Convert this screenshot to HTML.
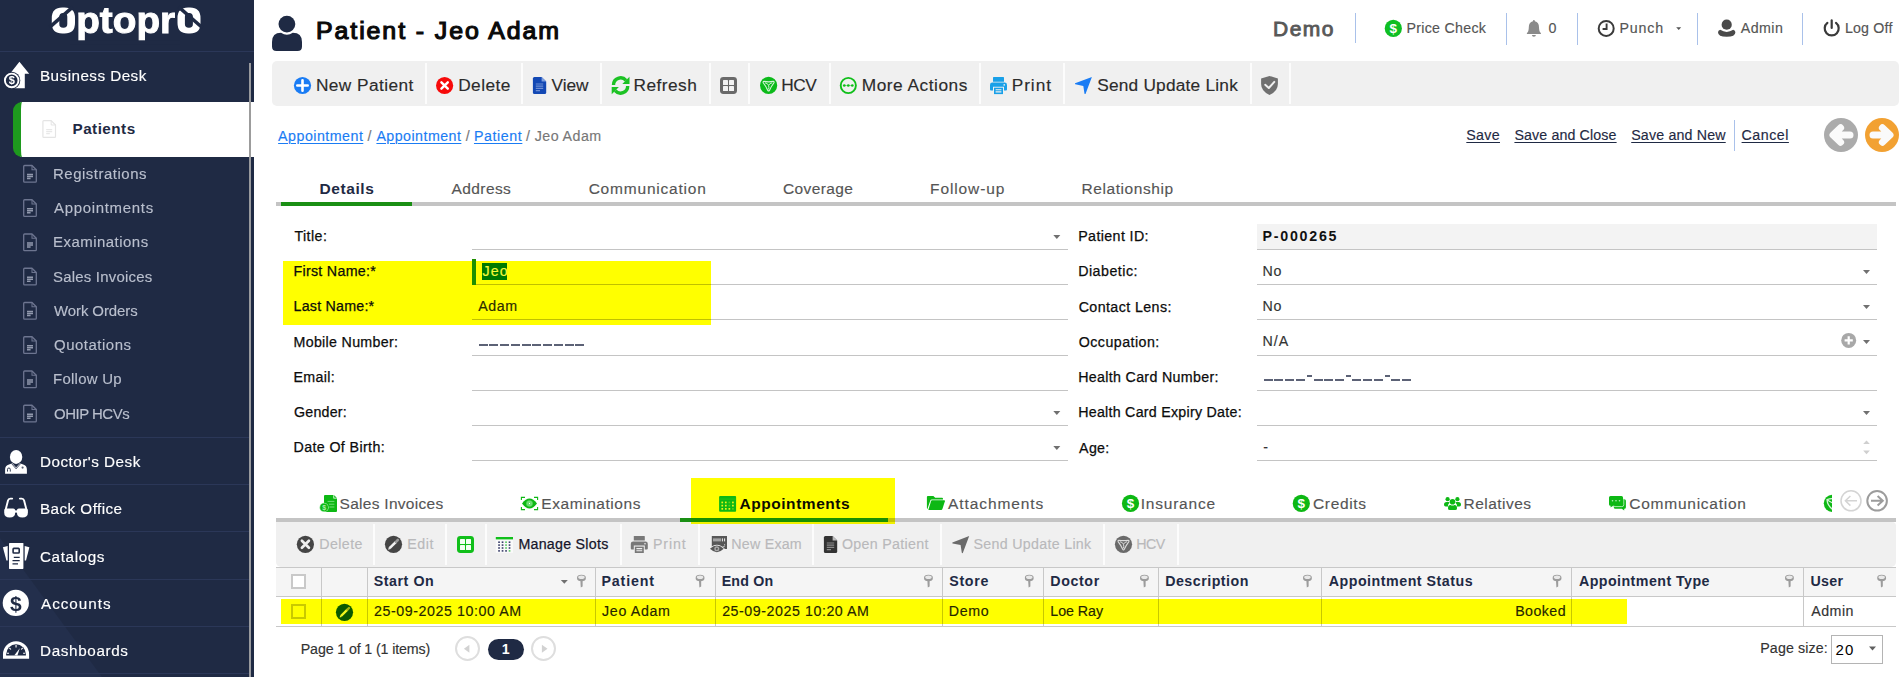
<!DOCTYPE html>
<html><head><meta charset="utf-8"><title>Patient - Jeo Adam</title>
<style>
html,body{margin:0;padding:0;}
body{width:1903px;height:677px;position:relative;overflow:hidden;background:#fff;font-family:"Liberation Sans",sans-serif;}
.b{position:absolute;display:block;box-sizing:border-box;}
.t{position:absolute;white-space:pre;display:block;}
</style></head>
<body>
<div class="b" style="left:0px;top:0px;width:254px;height:677px;background:#1f2a44;"></div>
<svg class="b" style="left:0;top:530px" width="110" height="147" viewBox="0 0 110 147"><polygon points="0,8 102,147 0,147" fill="#232f4c"/></svg>
<div class="b" style="left:0px;top:51px;width:254px;height:1px;background:#2b3758;"></div>
<div class="b" style="left:249px;top:63px;width:2px;height:614px;background:#999a9e;"></div>
<div class="b" style="left:13px;top:102px;width:241px;height:55px;background:#fff;border-left:8px solid #1e9a1e;border-radius:9px 0 0 9px;"></div>
<div class="b" style="left:249px;top:102px;width:2px;height:55px;background:#9c9c9c;"></div>
<div class="b" style="left:0px;top:437px;width:249px;height:1px;background:#2b3758;"></div>
<div class="b" style="left:0px;top:484px;width:249px;height:1px;background:#2b3758;"></div>
<div class="b" style="left:0px;top:531px;width:249px;height:1px;background:#2b3758;"></div>
<div class="b" style="left:0px;top:579px;width:249px;height:1px;background:#2b3758;"></div>
<div class="b" style="left:0px;top:626px;width:249px;height:1px;background:#2b3758;"></div>
<div class="b" style="left:0px;top:673px;width:249px;height:1px;background:#2b3758;"></div>
<div class="b" style="left:1355px;top:13px;width:1px;height:29.5px;background:#a9c1ea;"></div>
<div class="b" style="left:1506px;top:13px;width:1px;height:31.5px;background:#a9c1ea;"></div>
<div class="b" style="left:1577px;top:13px;width:1px;height:31.5px;background:#a9c1ea;"></div>
<div class="b" style="left:1697px;top:13px;width:1px;height:31.5px;background:#a9c1ea;"></div>
<div class="b" style="left:1802px;top:13px;width:1px;height:31.5px;background:#a9c1ea;"></div>
<div class="b" style="left:272px;top:61px;width:1627px;height:45px;background:#f0f0f0;border-radius:5px;"></div>
<div class="b" style="left:425px;top:63px;width:1.5px;height:41px;background:#fcfcfc;"></div>
<div class="b" style="left:521px;top:63px;width:1.5px;height:41px;background:#fcfcfc;"></div>
<div class="b" style="left:600px;top:63px;width:1.5px;height:41px;background:#fcfcfc;"></div>
<div class="b" style="left:709px;top:63px;width:1.5px;height:41px;background:#fcfcfc;"></div>
<div class="b" style="left:748px;top:63px;width:1.5px;height:41px;background:#fcfcfc;"></div>
<div class="b" style="left:829px;top:63px;width:1.5px;height:41px;background:#fcfcfc;"></div>
<div class="b" style="left:979px;top:63px;width:1.5px;height:41px;background:#fcfcfc;"></div>
<div class="b" style="left:1063px;top:63px;width:1.5px;height:41px;background:#fcfcfc;"></div>
<div class="b" style="left:1250px;top:63px;width:1.5px;height:41px;background:#fcfcfc;"></div>
<div class="b" style="left:1289px;top:63px;width:1.5px;height:41px;background:#fcfcfc;"></div>
<div class="b" style="left:1734px;top:120px;width:1px;height:31px;background:#a9c1ea;"></div>
<div class="b" style="left:276px;top:202px;width:1620px;height:4px;background:#c4c4c4;"></div>
<div class="b" style="left:281px;top:202px;width:131px;height:4px;background:#1a8f14;"></div>
<div class="b" style="left:283px;top:261px;width:428px;height:64px;background:#ffff00;"></div>
<div class="b" style="left:472px;top:249px;width:596px;height:1px;background:#c4c4c4;"></div>
<div class="b" style="left:1257px;top:249px;width:620px;height:1px;background:#c4c4c4;"></div>
<div class="b" style="left:472px;top:284px;width:596px;height:1px;background:#c4c4c4;"></div>
<div class="b" style="left:1257px;top:284px;width:620px;height:1px;background:#c4c4c4;"></div>
<div class="b" style="left:472px;top:319px;width:596px;height:1px;background:#c4c4c4;"></div>
<div class="b" style="left:1257px;top:319px;width:620px;height:1px;background:#c4c4c4;"></div>
<div class="b" style="left:472px;top:355px;width:596px;height:1px;background:#c4c4c4;"></div>
<div class="b" style="left:1257px;top:355px;width:620px;height:1px;background:#c4c4c4;"></div>
<div class="b" style="left:472px;top:390px;width:596px;height:1px;background:#c4c4c4;"></div>
<div class="b" style="left:1257px;top:390px;width:620px;height:1px;background:#c4c4c4;"></div>
<div class="b" style="left:472px;top:425px;width:596px;height:1px;background:#c4c4c4;"></div>
<div class="b" style="left:1257px;top:425px;width:620px;height:1px;background:#c4c4c4;"></div>
<div class="b" style="left:472px;top:460px;width:596px;height:1px;background:#c4c4c4;"></div>
<div class="b" style="left:1257px;top:460px;width:620px;height:1px;background:#c4c4c4;"></div>
<div class="b" style="left:472px;top:284px;width:239px;height:1px;background:#c0c000;"></div>
<div class="b" style="left:472px;top:319px;width:239px;height:1px;background:#c0c000;"></div>
<div class="b" style="left:1257px;top:224px;width:620px;height:25px;background:#f3f3f3;"></div>
<div class="b" style="left:472px;top:259px;width:4px;height:25.5px;background:#1e8f00;"></div>
<div class="b" style="left:482px;top:263px;width:25px;height:17px;background:#007a00;"></div>
<div class="b" style="left:478.7px;top:344.4px;width:9px;height:2px;background:#5c6276;"></div>
<div class="b" style="left:489.45px;top:344.4px;width:9px;height:2px;background:#5c6276;"></div>
<div class="b" style="left:500.2px;top:344.4px;width:9px;height:2px;background:#5c6276;"></div>
<div class="b" style="left:510.95px;top:344.4px;width:9px;height:2px;background:#5c6276;"></div>
<div class="b" style="left:521.7px;top:344.4px;width:9px;height:2px;background:#5c6276;"></div>
<div class="b" style="left:532.45px;top:344.4px;width:9px;height:2px;background:#5c6276;"></div>
<div class="b" style="left:543.2px;top:344.4px;width:9px;height:2px;background:#5c6276;"></div>
<div class="b" style="left:553.95px;top:344.4px;width:9px;height:2px;background:#5c6276;"></div>
<div class="b" style="left:564.7px;top:344.4px;width:9px;height:2px;background:#5c6276;"></div>
<div class="b" style="left:575.45px;top:344.4px;width:9px;height:2px;background:#5c6276;"></div>
<div class="b" style="left:1263.6px;top:379.2px;width:9px;height:2px;background:#5c6276;"></div>
<div class="b" style="left:1274.3px;top:379.2px;width:9px;height:2px;background:#5c6276;"></div>
<div class="b" style="left:1285.0px;top:379.2px;width:9px;height:2px;background:#5c6276;"></div>
<div class="b" style="left:1295.7px;top:379.2px;width:9px;height:2px;background:#5c6276;"></div>
<div class="b" style="left:1313.7px;top:379.2px;width:9px;height:2px;background:#5c6276;"></div>
<div class="b" style="left:1324.4px;top:379.2px;width:9px;height:2px;background:#5c6276;"></div>
<div class="b" style="left:1335.1px;top:379.2px;width:9px;height:2px;background:#5c6276;"></div>
<div class="b" style="left:1352.3px;top:379.2px;width:9px;height:2px;background:#5c6276;"></div>
<div class="b" style="left:1363.0px;top:379.2px;width:9px;height:2px;background:#5c6276;"></div>
<div class="b" style="left:1373.7px;top:379.2px;width:9px;height:2px;background:#5c6276;"></div>
<div class="b" style="left:1391.3px;top:379.2px;width:9px;height:2px;background:#5c6276;"></div>
<div class="b" style="left:1402.0px;top:379.2px;width:9px;height:2px;background:#5c6276;"></div>
<div class="b" style="left:1306.8px;top:375.4px;width:5px;height:1.6px;background:#5c6276;"></div>
<div class="b" style="left:1345.9px;top:375.4px;width:5px;height:1.6px;background:#5c6276;"></div>
<div class="b" style="left:1384.8px;top:375.4px;width:5px;height:1.6px;background:#5c6276;"></div>
<div class="b" style="left:691px;top:478px;width:204px;height:46px;background:#ffff00;"></div>
<div class="b" style="left:276px;top:518px;width:1620px;height:4px;background:#c4c4c4;"></div>
<div class="b" style="left:680px;top:518px;width:208px;height:4px;background:#1a8f14;"></div>
<div class="b" style="left:691px;top:518px;width:197px;height:4px;background:#1a8f00;"></div>
<div class="b" style="left:888px;top:518px;width:7px;height:4px;background:#c4c400;"></div>
<div class="b" style="left:276px;top:522px;width:1620px;height:45px;background:#f0f0f0;border-radius:0 4px 5px 5px;"></div>
<div class="b" style="left:691px;top:522px;width:204px;height:1.7px;background:#f0f000;"></div>
<div class="b" style="left:373px;top:524px;width:1.5px;height:41px;background:#fcfcfc;"></div>
<div class="b" style="left:445px;top:524px;width:1.5px;height:41px;background:#fcfcfc;"></div>
<div class="b" style="left:485px;top:524px;width:1.5px;height:41px;background:#fcfcfc;"></div>
<div class="b" style="left:620px;top:524px;width:1.5px;height:41px;background:#fcfcfc;"></div>
<div class="b" style="left:698px;top:524px;width:1.5px;height:41px;background:#fcfcfc;"></div>
<div class="b" style="left:812px;top:524px;width:1.5px;height:41px;background:#fcfcfc;"></div>
<div class="b" style="left:940px;top:524px;width:1.5px;height:41px;background:#fcfcfc;"></div>
<div class="b" style="left:1103px;top:524px;width:1.5px;height:41px;background:#fcfcfc;"></div>
<div class="b" style="left:1177px;top:524px;width:1.5px;height:41px;background:#fcfcfc;"></div>
<div class="b" style="left:276px;top:567px;width:1620px;height:30px;background:#f5f5f5;border-top:1px solid #c8c8c8;border-bottom:1px solid #c8c8c8;"></div>
<div class="b" style="left:276px;top:626px;width:1620px;height:1px;background:#c8c8c8;"></div>
<div class="b" style="left:281px;top:599px;width:1346px;height:24.6px;background:#ffff00;"></div>
<div class="b" style="left:321px;top:568px;width:1px;height:58px;background:#c8c8c8;"></div>
<div class="b" style="left:367px;top:568px;width:1px;height:58px;background:#c8c8c8;"></div>
<div class="b" style="left:595px;top:568px;width:1px;height:58px;background:#c8c8c8;"></div>
<div class="b" style="left:715px;top:568px;width:1px;height:58px;background:#c8c8c8;"></div>
<div class="b" style="left:942px;top:568px;width:1px;height:58px;background:#c8c8c8;"></div>
<div class="b" style="left:1043px;top:568px;width:1px;height:58px;background:#c8c8c8;"></div>
<div class="b" style="left:1158px;top:568px;width:1px;height:58px;background:#c8c8c8;"></div>
<div class="b" style="left:1321px;top:568px;width:1px;height:58px;background:#c8c8c8;"></div>
<div class="b" style="left:1571px;top:568px;width:1px;height:58px;background:#c8c8c8;"></div>
<div class="b" style="left:1803px;top:568px;width:1px;height:58px;background:#c8c8c8;"></div>
<div class="b" style="left:321px;top:599px;width:1px;height:24.6px;background:#c8c800;"></div>
<div class="b" style="left:367px;top:599px;width:1px;height:24.6px;background:#c8c800;"></div>
<div class="b" style="left:595px;top:599px;width:1px;height:24.6px;background:#c8c800;"></div>
<div class="b" style="left:715px;top:599px;width:1px;height:24.6px;background:#c8c800;"></div>
<div class="b" style="left:942px;top:599px;width:1px;height:24.6px;background:#c8c800;"></div>
<div class="b" style="left:1043px;top:599px;width:1px;height:24.6px;background:#c8c800;"></div>
<div class="b" style="left:1158px;top:599px;width:1px;height:24.6px;background:#c8c800;"></div>
<div class="b" style="left:1321px;top:599px;width:1px;height:24.6px;background:#c8c800;"></div>
<div class="b" style="left:1571px;top:599px;width:1px;height:24.6px;background:#c8c800;"></div>
<div class="b" style="left:291px;top:574px;width:15px;height:15px;background:#fff;border:2px solid #c9c9c9;"></div>
<div class="b" style="left:291px;top:604px;width:15px;height:15px;background:#ffff00;border:2px solid #c9c900;"></div>
<div class="b" style="left:454.5px;top:636.3px;width:25px;height:25px;background:#fff;border:2px solid #dedede;border-radius:50%;"></div>
<div class="b" style="left:531.3px;top:636.3px;width:25px;height:25px;background:#fff;border:2px solid #dedede;border-radius:50%;"></div>
<div class="b" style="left:488px;top:639px;width:36px;height:20.6px;background:#1f2a44;border-radius:11px;"></div>
<div class="b" style="left:1831px;top:635px;width:52px;height:29px;background:#fff;border:1px solid #b4b4b4;"></div>
<svg class="b" style="left:0;top:0" width="1903" height="677" viewBox="0 0 1903 677"><circle cx="286.9" cy="24.1" r="8.4" fill="#1f2a44"/>
<path d="M272 46.5 V42 Q272 32.8 281 32.8 Q286.9 36.9 292.8 32.8 Q302 32.8 302 42 V46.5 Q302 51 297.5 51 H276.5 Q272 51 272 46.5 Z" fill="#1f2a44"/>
<circle cx="1393.3" cy="28.4" r="8.6" fill="#0fbf24"/>
<text x="1393.3" y="33.2" text-anchor="middle" font-family="Liberation Sans, sans-serif" font-weight="700" font-size="13.5" fill="#fff">$</text>
<path d="M1533.9 20 Q1534.9 20 1534.9 21.2 Q1539 22.4 1539 27.2 Q1539 31.6 1540.9 33 V34 H1526.9 V33 Q1528.8 31.6 1528.8 27.2 Q1528.8 22.4 1532.9 21.2 Q1532.9 20 1533.9 20 Z" fill="#8a8a8a"/>
<path d="M1531.9 35 H1535.9 Q1535.9 36.8 1533.9 36.8 Q1531.9 36.8 1531.9 35 Z" fill="#8a8a8a"/>
<circle cx="1606.2" cy="28.4" r="7.5" fill="none" stroke="#3a3a3a" stroke-width="2"/>
<path d="M1606.6 23.6 V29 H1602.6" fill="none" stroke="#3a3a3a" stroke-width="1.9"/>
<path d="M1676.2 27.2 H1681.2 L1678.7 30 Z" fill="#555"/>
<circle cx="1726.7" cy="24.7" r="5.1" fill="#4a4a4a"/>
<path d="M1718 32.2 Q1718 30.4 1720.2 29.8 Q1726.7 34 1733.2 29.8 Q1735.4 30.4 1735.4 32.2 Q1735.4 36.8 1726.7 36.8 Q1718 36.8 1718 32.2 Z" fill="#4a4a4a"/>
<path d="M1827.4 22.9 A7 7 0 1 0 1836 22.9" fill="none" stroke="#3a3a3a" stroke-width="2.2" stroke-linecap="round"/>
<path d="M1831.7 20.4 V28" stroke="#3a3a3a" stroke-width="2.2" stroke-linecap="round"/>
<circle cx="302.5" cy="85.5" r="8.6" fill="#1a7cf4"/>
<path d="M297.3 85.5 H307.7 M302.5 80.3 V90.7" stroke="#fff" stroke-width="2.6" stroke-linecap="round"/>
<circle cx="444.6" cy="85.5" r="8.6" fill="#f70a0a"/>
<path d="M441.4 82.3 L447.8 88.7 M447.8 82.3 L441.4 88.7" stroke="#fff" stroke-width="2.4" stroke-linecap="round"/>
<path d="M534.4 76.9 H541.6 L546.2 81.5 V92.5 Q546.2 94 544.7 94 H534.4 Q532.9 94 532.9 92.5 V78.4 Q532.9 76.9 534.4 76.9 Z" fill="#1348b4"/>
<path d="M541.6 76.9 V81.5 H546.2 Z" fill="#7fa0e0"/>
<path d="M535.8 84 H543.2 M535.8 86.2 H543.2 M535.8 88.4 H543.2 M535.8 90.6 H540" stroke="#6f8fd4" stroke-width="1.2"/>
<path d="M613.5 85 A7.1 7.1 0 0 1 626 80.4" fill="none" stroke="#1cc224" stroke-width="3.4"/>
<path d="M629.5 76.8 V84 H622.3 Z" fill="#1cc224"/>
<path d="M627.7 86 A7.1 7.1 0 0 1 615.2 90.6" fill="none" stroke="#1cc224" stroke-width="3.4"/>
<path d="M611.7 94.2 V87 H618.9 Z" fill="#1cc224"/>
<rect x="720" y="77" width="17" height="17" rx="3.4" fill="#6a6a6a"/>
<rect x="723" y="80" width="5" height="5" rx="0.6" fill="#f4f4f4"/><rect x="729" y="80" width="5" height="5" rx="0.6" fill="#f4f4f4"/><rect x="723" y="86" width="5" height="5" rx="0.6" fill="#f4f4f4"/><rect x="729" y="86" width="5" height="5" rx="0.6" fill="#f4f4f4"/>
<circle cx="768.6" cy="85.4" r="8.6" fill="#0cba1a"/>
<path d="M764.0 81.4 Q768.6 82.2 773.2 81.4 Q774.6 81.60000000000001 773.8000000000001 83.0 Q771.2 86.4 769.4 90.4 Q768.6 91.60000000000001 767.8000000000001 90.4 Q766.0 86.4 763.4 83.0 Q762.6 81.60000000000001 764.0 81.4 Z" fill="none" stroke="#d4f4d7" stroke-width="1.15" stroke-linejoin="round"/>
<path d="M765.0 82.80000000000001 Q767.6 83.0 768.6 85.4 Q769.6 83.0 772.2 82.80000000000001 M768.6 85.4 Q769.2 87.4 768.6 89.4" fill="none" stroke="#d4f4d7" stroke-width="1"/>
<circle cx="848.3" cy="85.5" r="7.6" fill="none" stroke="#10bf1a" stroke-width="1.9"/>
<circle cx="844.3" cy="85.5" r="1.35" fill="#10bf1a"/><circle cx="848.3" cy="85.5" r="1.35" fill="#10bf1a"/><circle cx="852.3" cy="85.5" r="1.35" fill="#10bf1a"/>
<path d="M844.3 85.5 H852.3" stroke="#10bf1a" stroke-width="0.7" opacity="0.6"/>
<path d="M993.6 77.1 H1003.4 Q1004 77.1 1004 77.69999999999999 V81.69999999999999 H993 V77.69999999999999 Q993 77.1 993.6 77.1 Z" fill="#19a0e8"/>
<path d="M992.4 82.5 H1004.6 Q1007 82.5 1007 84.89999999999999 V89.5 Q1007 90.5 1006 90.5 H1004 V86.69999999999999 H993 V90.5 H991 Q990 90.5 990 89.5 V84.89999999999999 Q990 82.5 992.4 82.5 Z" fill="#19a0e8"/>
<rect x="994" y="87.69999999999999" width="9" height="6.4" fill="#19a0e8"/>
<path d="M995.6 89.69999999999999 H1001.4 M995.6 91.89999999999999 H1001.4" stroke="#f0f0f0" stroke-width="1.1"/>
<circle cx="1004.2" cy="84.89999999999999" r="0.8" fill="#f0f0f0"/>
<path d="M1091.9 76.9 L1085.5 93.9 Q1084.9 94.30000000000001 1084.5 93.7 L1083.3 85.9 L1075.3 84.3 Q1074.7 83.9 1075.1000000000001 83.3 Z" fill="#1a7cf4"/>
<path d="M1269.5 75.9 L1277.9 78.4 V84 Q1277.9 91.2 1269.5 94.9 Q1261.1 91.2 1261.1 84 V78.4 Z" fill="#707070"/>
<path d="M1265.2 84.8 L1268.8 88 L1274.3 81.9" fill="none" stroke="#efefef" stroke-width="2" stroke-linecap="round" stroke-linejoin="round"/>
<circle cx="1841" cy="135" r="17" fill="#ababab"/>
<path d="M1850 135 H1833.4 M1840.6 127.8 L1833 135 L1840.6 142.2" fill="none" stroke="#fafafa" stroke-width="7" stroke-linecap="round" stroke-linejoin="round"/>
<circle cx="1882" cy="135" r="17" fill="#f2a132"/>
<path d="M1873 135 H1889.6 M1882.4 127.8 L1890 135 L1882.4 142.2" fill="none" stroke="#fafafa" stroke-width="7" stroke-linecap="round" stroke-linejoin="round"/>
<path d="M1053.3 235.0 H1060.3 L1056.8 239.0 Z" fill="#707070"/>
<path d="M1053.3 411.0 H1060.3 L1056.8 415.0 Z" fill="#707070"/>
<path d="M1053.3 446.0 H1060.3 L1056.8 450.0 Z" fill="#707070"/>
<path d="M1863.0 270.0 H1870.0 L1866.5 274.0 Z" fill="#707070"/>
<path d="M1863.0 305.0 H1870.0 L1866.5 309.0 Z" fill="#707070"/>
<path d="M1863.0 340.0 H1870.0 L1866.5 344.0 Z" fill="#707070"/>
<path d="M1863.0 411.0 H1870.0 L1866.5 415.0 Z" fill="#707070"/>
<circle cx="1848.7" cy="340.4" r="7.5" fill="#a8a8a8"/>
<path d="M1844.6 340.4 H1852.8 M1848.7 336.3 V344.5" stroke="#fff" stroke-width="2.2"/>
<path d="M1863.2 444 H1869.8 L1866.5 440.4 Z" fill="#cfcfcf"/>
<path d="M1863.2 450.6 H1869.8 L1866.5 454.2 Z" fill="#cfcfcf"/>
<path d="M325 494.9 H333.4 L337 498.5 V510.9 Q337 511.9 336 511.9 H325 Q324 511.9 324 510.9 V495.9 Q324 494.9 325 494.9 Z" fill="#0db814"/>
<path d="M333.4 494.9 V498.5 H337 Z" fill="#fff"/>
<path d="M334.2 495.2 L336.7 497.7 H334.2 Z" fill="#0db814"/>
<path d="M327.6 501.4 H334.4 M329 504.2 H334.4 M329.4 507 H334.4" stroke="#7fe085" stroke-width="0.9"/>
<circle cx="324.1" cy="507.4" r="4.6" fill="#9be79f"/>
<circle cx="324.1" cy="507.4" r="3.9" fill="#0db814"/>
<text x="324.1" y="510" text-anchor="middle" font-family="Liberation Sans, sans-serif" font-weight="700" font-size="7" fill="#a8eeac">$</text>
<path d="M521.4 500 V497.4 H525 M534 497.4 H537.6 V500 M521.4 507 V509.6 H525 M534 509.6 H537.6 V507" fill="none" stroke="#0db814" stroke-width="1.1"/>
<path d="M522 503.5 Q529.5 493.6 537 503.5 Q529.5 513.4 522 503.5 Z" fill="#0db814"/>
<circle cx="529.5" cy="503.5" r="3.3" fill="#5ad860"/>
<circle cx="529.5" cy="503.5" r="2" fill="none" stroke="#8be68f" stroke-width="0.6"/>
<circle cx="529.5" cy="503.5" r="0.7" fill="#fff"/>
<rect x="719.1" y="496" width="17" height="15.8" rx="1" fill="#0db814"/>
<path d="M719.1 499.1 H736.1" stroke="#35c81a" stroke-width="0.6"/>
<rect x="721.4" y="501.6" width="1.7" height="1.7" fill="#e8f51a" opacity="1"/>
<rect x="724.9499999999999" y="501.6" width="1.7" height="1.7" fill="#e8f51a" opacity="1"/>
<rect x="728.5" y="501.6" width="1.7" height="1.7" fill="#e8f51a" opacity="0.35"/>
<rect x="732.05" y="501.6" width="1.7" height="1.7" fill="#e8f51a" opacity="1"/>
<rect x="721.4" y="504.8" width="1.7" height="1.7" fill="#e8f51a" opacity="1"/>
<rect x="724.9499999999999" y="504.8" width="1.7" height="1.7" fill="#e8f51a" opacity="1"/>
<rect x="728.5" y="504.8" width="1.7" height="1.7" fill="#e8f51a" opacity="0.35"/>
<rect x="732.05" y="504.8" width="1.7" height="1.7" fill="#e8f51a" opacity="1"/>
<rect x="721.4" y="508.0" width="1.7" height="1.7" fill="#e8f51a" opacity="1"/>
<rect x="724.9499999999999" y="508.0" width="1.7" height="1.7" fill="#e8f51a" opacity="1"/>
<rect x="728.5" y="508.0" width="1.7" height="1.7" fill="#e8f51a" opacity="1"/>
<rect x="732.05" y="508.0" width="1.7" height="1.7" fill="#e8f51a" opacity="0.35"/>
<path d="M927.9 495.9 H933.4 L935.2 497.8 H942 Q943 497.8 943 498.8 V499.6 H931.8 Q930.6 499.6 930.2 500.8 L927.4 509 Q926.9 509 926.9 508 V496.9 Q926.9 495.9 927.9 495.9 Z" fill="#0db814"/>
<path d="M932 500.3 H944.2 Q945.2 500.3 944.9 501.3 L942.4 509 Q942.1 509.9 941.1 509.9 H928.6 Q928.4 509.9 928.5 509.5 L931 501.2 Q931.3 500.3 932 500.3 Z" fill="#0db814"/>
<circle cx="1130.5" cy="503.4" r="8.6" fill="#0db814"/>
<text x="1130.5" y="508.09999999999997" text-anchor="middle" font-family="Liberation Sans, sans-serif" font-weight="700" font-size="13.5" fill="#fff">$</text>
<circle cx="1301.3" cy="503.4" r="8.6" fill="#0db814"/>
<text x="1301.3" y="508.09999999999997" text-anchor="middle" font-family="Liberation Sans, sans-serif" font-weight="700" font-size="13.5" fill="#fff">$</text>
<circle cx="1447.6" cy="499.2" r="2.1" fill="#0db814"/><circle cx="1457.4" cy="499.2" r="2.1" fill="#0db814"/>
<path d="M1444 504.8 Q1444 502 1446.6 502 H1448.4 Q1449.4 502 1449.6 502.6 Q1447.6 504.6 1448.2 506.6 H1445.6 Q1444 506.6 1444 504.8 Z" fill="#0db814"/>
<path d="M1461 504.8 Q1461 502 1458.4 502 H1456.6 Q1455.6 502 1455.4 502.6 Q1457.4 504.6 1456.8 506.6 H1459.4 Q1461 506.6 1461 504.8 Z" fill="#0db814"/>
<circle cx="1452.5" cy="501.8" r="2.8" fill="#0db814"/>
<path d="M1448 508 Q1448 505 1450.4 505 Q1452.5 506.2 1454.6 505 Q1457 505 1457 508 V508.4 Q1457 510 1455.2 510 H1449.8 Q1448 510 1448 508.4 Z" fill="#0db814"/>
<path d="M1616 499.3 H1624.4 Q1625.9 499.3 1625.9 500.8 V507.3 Q1625.9 508.8 1624.4 508.8 H1624.2 V510.4 L1621.8 508.8 H1615.2 Q1613.8 508.8 1613.8 507.3 Z" fill="#0db814"/>
<path d="M1612.6 506.6 H1621.8 Q1623.8 506.6 1623.8 504.8 V498.6" fill="none" stroke="#b9efbc" stroke-width="0.9"/>
<path d="M1610.5 496 H1621.5 Q1623 496 1623 497.5 V504.2 Q1623 505.7 1621.5 505.7 H1613 L1610.6 507.6 V505.7 H1610.5 Q1609 505.7 1609 504.2 V497.5 Q1609 496 1610.5 496 Z" fill="#0db814"/>
<circle cx="1612.5" cy="500.7" r="0.8" fill="#b9efbc"/><circle cx="1616" cy="500.7" r="0.8" fill="#b9efbc"/><circle cx="1619.5" cy="500.7" r="0.8" fill="#b9efbc"/>
<clipPath id="cp1"><rect x="1820" y="490" width="12.1" height="30"/></clipPath>
<g clip-path="url(#cp1)"><circle cx="1832.4" cy="503.3" r="8.6" fill="#0db814"/><path d="M1827 499.7 Q1832.4 497.7 1837.8 499.7 Q1837.4 505.3 1832.4 509.3 Q1827.4 505.3 1827 499.7 Z" fill="none" stroke="#d6f5d8" stroke-width="1.3"/><path d="M1827.2 499.9 L1832.4 502.9" stroke="#d6f5d8" stroke-width="1.2"/></g>
<circle cx="1851" cy="500.8" r="10" fill="none" stroke="#d4d4d4" stroke-width="1.5"/>
<path d="M1857 500.8 H1845.6 M1850.4 496 L1845.4 500.8 L1850.4 505.6" fill="none" stroke="#d4d4d4" stroke-width="1.5"/>
<circle cx="1877.1" cy="500.8" r="9.8" fill="none" stroke="#9c9c9c" stroke-width="2"/>
<path d="M1871 500.8 H1882.6 M1877.6 496 L1882.8 500.8 L1877.6 505.6" fill="none" stroke="#9c9c9c" stroke-width="2"/>
<circle cx="305.4" cy="544.3" r="8.6" fill="#454545"/>
<path d="M301.9 540.8 L308.9 547.8 M308.9 540.8 L301.9 547.8" stroke="#eee" stroke-width="2.7" stroke-linecap="round"/>
<circle cx="393.5" cy="544.3" r="8.6" fill="#454545"/>
<path d="M389.6 548.1999999999999 L396 541.8" stroke="#f2f2f2" stroke-width="2.6" stroke-linecap="butt"/>
<path d="M396 541.8 L397.8 540.0" stroke="#9c9c9c" stroke-width="2.6" stroke-linecap="round"/>
<path d="M388.2 549.6999999999999 L388.8 547.3 L390.6 549.0999999999999 Z" fill="#f2f2f2"/>
<rect x="457" y="536" width="17" height="17" rx="3.4" fill="#10bf1a"/>
<rect x="460" y="539" width="5" height="5" rx="0.6" fill="#f4fff4"/><rect x="466" y="539" width="5" height="5" rx="0.6" fill="#f4fff4"/><rect x="460" y="545" width="5" height="5" rx="0.6" fill="#f4fff4"/><rect x="466" y="545" width="5" height="5" rx="0.6" fill="#f4fff4"/>
<rect x="495.8" y="537" width="17.2" height="15.8" fill="#fafafa"/>
<rect x="495.8" y="537" width="17.2" height="2.4" fill="#10bf1a"/>
<rect x="498.2" y="541.4" width="1.7" height="1.6" fill="#3a3f6a"/>
<rect x="501.7" y="541.4" width="1.7" height="1.6" fill="#3a3f6a"/>
<rect x="505.2" y="541.4" width="1.7" height="1.6" fill="#58c860"/>
<rect x="508.7" y="541.4" width="1.7" height="1.6" fill="#3a3f6a"/>
<rect x="498.2" y="544.3" width="1.7" height="1.6" fill="#3a3f6a"/>
<rect x="501.7" y="544.3" width="1.7" height="1.6" fill="#3a3f6a"/>
<rect x="505.2" y="544.3" width="1.7" height="1.6" fill="#58c860"/>
<rect x="508.7" y="544.3" width="1.7" height="1.6" fill="#3a3f6a"/>
<rect x="498.2" y="547.1999999999999" width="1.7" height="1.6" fill="#3a3f6a"/>
<rect x="501.7" y="547.1999999999999" width="1.7" height="1.6" fill="#3a3f6a"/>
<rect x="505.2" y="547.1999999999999" width="1.7" height="1.6" fill="#58c860"/>
<rect x="508.7" y="547.1999999999999" width="1.7" height="1.6" fill="#3a3f6a"/>
<rect x="498.2" y="550.1" width="1.7" height="1.6" fill="#3a3f6a"/>
<rect x="501.7" y="550.1" width="1.7" height="1.6" fill="#3a3f6a"/>
<rect x="505.2" y="550.1" width="1.7" height="1.6" fill="#3a3f6a"/>
<rect x="508.7" y="550.1" width="1.7" height="1.6" fill="#58c860"/>
<path d="M634.4 536 H644.1999999999999 Q644.8 536 644.8 536.6 V540.6 H633.8 V536.6 Q633.8 536 634.4 536 Z" fill="#787878"/>
<path d="M633.1999999999999 541.4 H645.4 Q647.8 541.4 647.8 543.8 V548.4 Q647.8 549.4 646.8 549.4 H644.8 V545.6 H633.8 V549.4 H631.8 Q630.8 549.4 630.8 548.4 V543.8 Q630.8 541.4 633.1999999999999 541.4 Z" fill="#787878"/>
<rect x="634.8" y="546.6" width="9" height="6.4" fill="#787878"/>
<path d="M636.4 548.6 H642.1999999999999 M636.4 550.8 H642.1999999999999" stroke="#f0f0f0" stroke-width="1.1"/>
<circle cx="645.0" cy="543.8" r="0.8" fill="#f0f0f0"/>
<rect x="711.8" y="536" width="15.2" height="13" fill="#575757"/>
<path d="M714 541.4 V538.4 M716 541.4 V538.4 M718 541.4 V538.4 M720 541.4 V538.4 M722.4 541.4 V538.4 M724.6 541.4 V538.4" stroke="#f0f0f0" stroke-width="1"/>
<path d="M724.6 544 V545.6 M722.6 546.6 H724.8" stroke="#d0d0d0" stroke-width="0.8"/>
<path d="M709 548.8 Q716.8 540.6 724.8 548.8 Q716.8 557 709 548.8 Z" fill="#f0f0f0"/>
<path d="M710 548.8 Q716.8 542 723.8 548.8 Q716.8 555.6 710 548.8 Z" fill="#575757"/>
<circle cx="716.8" cy="548.8" r="2.5" fill="#a8a8a8"/><circle cx="716.8" cy="548.8" r="1.1" fill="#575757"/>
<path d="M825.4 536 H832.6 L837.2 540.6 V551.5 Q837.2 553 835.7 553 H825.4 Q823.9 553 823.9 551.5 V537.5 Q823.9 536 825.4 536 Z" fill="#333"/>
<path d="M832.6 536 V540.6 H837.2 Z" fill="#bdbdbd"/>
<path d="M826.8 543 H834.2 M826.8 545.2 H834.2 M826.8 547.4 H834.2 M826.8 549.6 H831" stroke="#8c8c8c" stroke-width="1.2"/>
<path d="M969.2 536.0 L962.8 553.0 Q962.2 553.4 961.8 552.8 L960.6 545.0 L952.6 543.4 Q952 543.0 952.4 542.4 Z" fill="#6a6a6a"/>
<circle cx="1123.5" cy="544.3" r="8.6" fill="#6a6a6a"/>
<path d="M1118.9 540.3 Q1123.5 541.0999999999999 1128.1 540.3 Q1129.5 540.5 1128.7 541.9 Q1126.1 545.3 1124.3 549.3 Q1123.5 550.5 1122.7 549.3 Q1120.9 545.3 1118.3 541.9 Q1117.5 540.5 1118.9 540.3 Z" fill="none" stroke="#dcdcdc" stroke-width="1.15" stroke-linejoin="round"/>
<path d="M1119.9 541.6999999999999 Q1122.5 541.9 1123.5 544.3 Q1124.5 541.9 1127.1 541.6999999999999 M1123.5 544.3 Q1124.1 546.3 1123.5 548.3" fill="none" stroke="#dcdcdc" stroke-width="1"/>
<ellipse cx="581.45" cy="578.1" rx="4.45" ry="3.25" fill="#9c9c9c"/>
<ellipse cx="581.45" cy="577.3" rx="3.25" ry="1.75" fill="#e9e9e9"/>
<path d="M580.4 580.8 H582.6 V586.6 L580.8 587.6 Z" fill="#9c9c9c"/>
<ellipse cx="700.0500000000001" cy="578.1" rx="4.45" ry="3.25" fill="#9c9c9c"/>
<ellipse cx="700.0500000000001" cy="577.3" rx="3.25" ry="1.75" fill="#e9e9e9"/>
<path d="M699.0 580.8 H701.2 V586.6 L699.4 587.6 Z" fill="#9c9c9c"/>
<ellipse cx="928.45" cy="578.1" rx="4.45" ry="3.25" fill="#9c9c9c"/>
<ellipse cx="928.45" cy="577.3" rx="3.25" ry="1.75" fill="#e9e9e9"/>
<path d="M927.4 580.8 H929.6 V586.6 L927.8 587.6 Z" fill="#9c9c9c"/>
<ellipse cx="1029.25" cy="578.1" rx="4.45" ry="3.25" fill="#9c9c9c"/>
<ellipse cx="1029.25" cy="577.3" rx="3.25" ry="1.75" fill="#e9e9e9"/>
<path d="M1028.2 580.8 H1030.3999999999999 V586.6 L1028.6 587.6 Z" fill="#9c9c9c"/>
<ellipse cx="1144.45" cy="578.1" rx="4.45" ry="3.25" fill="#9c9c9c"/>
<ellipse cx="1144.45" cy="577.3" rx="3.25" ry="1.75" fill="#e9e9e9"/>
<path d="M1143.4 580.8 H1145.6 V586.6 L1143.8 587.6 Z" fill="#9c9c9c"/>
<ellipse cx="1307.45" cy="578.1" rx="4.45" ry="3.25" fill="#9c9c9c"/>
<ellipse cx="1307.45" cy="577.3" rx="3.25" ry="1.75" fill="#e9e9e9"/>
<path d="M1306.4 580.8 H1308.6 V586.6 L1306.8 587.6 Z" fill="#9c9c9c"/>
<ellipse cx="1557.05" cy="578.1" rx="4.45" ry="3.25" fill="#9c9c9c"/>
<ellipse cx="1557.05" cy="577.3" rx="3.25" ry="1.75" fill="#e9e9e9"/>
<path d="M1556.0 580.8 H1558.1999999999998 V586.6 L1556.3999999999999 587.6 Z" fill="#9c9c9c"/>
<ellipse cx="1789.45" cy="578.1" rx="4.45" ry="3.25" fill="#9c9c9c"/>
<ellipse cx="1789.45" cy="577.3" rx="3.25" ry="1.75" fill="#e9e9e9"/>
<path d="M1788.4 580.8 H1790.6 V586.6 L1788.8 587.6 Z" fill="#9c9c9c"/>
<ellipse cx="1881.65" cy="578.1" rx="4.45" ry="3.25" fill="#9c9c9c"/>
<ellipse cx="1881.65" cy="577.3" rx="3.25" ry="1.75" fill="#e9e9e9"/>
<path d="M1880.6000000000001 580.8 H1882.8 V586.6 L1881.0 587.6 Z" fill="#9c9c9c"/>
<path d="M560.8 580.0 H567.8 L564.3 583.8 Z" fill="#707070"/>
<circle cx="344.5" cy="612.3" r="8.6" fill="#0b5a00"/>
<path d="M341 616 L347.4 609.6" stroke="#f2f81e" stroke-width="2.4" stroke-linecap="butt"/>
<path d="M347.4 609.6 L349 608" stroke="#a4b40e" stroke-width="2.4" stroke-linecap="round"/>
<path d="M339.6 617.6 L340.2 615.2 L341.9 616.9 Z" fill="#f2f81e"/>
<path d="M469.4 644.8 V652.8 L463.9 648.8 Z" fill="#d2d2d2"/>
<path d="M541.9 644.8 V652.8 L547.5 648.8 Z" fill="#d2d2d2"/>
<path d="M1869.0 646.6 H1876.0 L1872.5 650.6 Z" fill="#606060"/></svg>
<span class="t" style="left:72.5px;top:119.75px;font-size:15.26px;line-height:18px;color:#1f2a44;letter-spacing:0.47px;font-weight:700;">Patients</span>
<span class="t" style="left:315.96px;top:17px;font-size:23.5px;line-height:28px;color:#0a0a0a;letter-spacing:1.81px;transform:scaleX(1.06);transform-origin:0 0;-webkit-text-stroke:1.15px #0a0a0a;">Patient - Jeo Adam</span>
<span class="t" style="left:1272.62px;top:17.4px;font-size:20px;line-height:24px;color:#585858;letter-spacing:1.43px;transform:scaleX(1.05);transform-origin:0 0;-webkit-text-stroke:0.85px #585858;">Demo</span>
<span class="t" style="left:1406.46px;top:20.1px;font-size:14.24px;line-height:17px;color:#555;letter-spacing:0.28px;-webkit-text-stroke-width:0.15px;">Price Check</span>
<span class="t" style="left:1548.55px;top:20.1px;font-size:14.24px;line-height:17px;color:#555;letter-spacing:0px;-webkit-text-stroke-width:0.15px;">0</span>
<span class="t" style="left:1619.56px;top:20.1px;font-size:14.24px;line-height:17px;color:#555;letter-spacing:0.83px;-webkit-text-stroke-width:0.15px;">Punch</span>
<span class="t" style="left:1740.71px;top:20.1px;font-size:14.24px;line-height:17px;color:#555;letter-spacing:0.44px;-webkit-text-stroke-width:0.15px;">Admin</span>
<span class="t" style="left:1844.96px;top:20.1px;font-size:14.24px;line-height:17px;color:#555;letter-spacing:0.16px;-webkit-text-stroke-width:0.15px;">Log Off</span>
<span class="t" style="left:315.93px;top:74.8px;font-size:17.3px;line-height:21px;color:#2b2b2b;letter-spacing:0.43px;-webkit-text-stroke-width:0.15px;">New Patient</span>
<span class="t" style="left:458.23px;top:74.8px;font-size:17.3px;line-height:21px;color:#2b2b2b;letter-spacing:0.42px;-webkit-text-stroke-width:0.15px;">Delete</span>
<span class="t" style="left:551.47px;top:74.8px;font-size:17.3px;line-height:21px;color:#2b2b2b;letter-spacing:-0.02px;-webkit-text-stroke-width:0.15px;">View</span>
<span class="t" style="left:633.53px;top:74.8px;font-size:17.3px;line-height:21px;color:#2b2b2b;letter-spacing:0.47px;-webkit-text-stroke-width:0.15px;">Refresh</span>
<span class="t" style="left:781.33px;top:74.8px;font-size:17.3px;line-height:21px;color:#2b2b2b;letter-spacing:-0.54px;-webkit-text-stroke-width:0.15px;">HCV</span>
<span class="t" style="left:861.73px;top:74.8px;font-size:17.3px;line-height:21px;color:#2b2b2b;letter-spacing:0.52px;-webkit-text-stroke-width:0.15px;">More Actions</span>
<span class="t" style="left:1011.73px;top:74.8px;font-size:17.3px;line-height:21px;color:#2b2b2b;letter-spacing:0.93px;-webkit-text-stroke-width:0.15px;">Print</span>
<span class="t" style="left:1097.15px;top:74.8px;font-size:17.3px;line-height:21px;color:#2b2b2b;letter-spacing:0.22px;-webkit-text-stroke-width:0.15px;">Send Update Link</span>
<span class="t" style="left:278.11px;top:127.5px;font-size:14.24px;line-height:17px;color:#1a7cf4;letter-spacing:0.48px;-webkit-text-stroke-width:0.15px;text-decoration:underline;text-decoration-thickness:1px;text-underline-offset:1.6px;">Appointment</span>
<span class="t" style="left:367.6px;top:127.5px;font-size:14.24px;line-height:17px;color:#777;letter-spacing:0px;-webkit-text-stroke-width:0.15px;">/</span>
<span class="t" style="left:376.41px;top:127.5px;font-size:14.24px;line-height:17px;color:#1a7cf4;letter-spacing:0.46px;-webkit-text-stroke-width:0.15px;text-decoration:underline;text-decoration-thickness:1px;text-underline-offset:1.6px;">Appointment</span>
<span class="t" style="left:465.7px;top:127.5px;font-size:14.24px;line-height:17px;color:#777;letter-spacing:0px;-webkit-text-stroke-width:0.15px;">/</span>
<span class="t" style="left:473.96px;top:127.5px;font-size:14.24px;line-height:17px;color:#1a7cf4;letter-spacing:0.58px;-webkit-text-stroke-width:0.15px;text-decoration:underline;text-decoration-thickness:1px;text-underline-offset:1.6px;">Patient</span>
<span class="t" style="left:526px;top:127.5px;font-size:14.24px;line-height:17px;color:#777;letter-spacing:0.43px;-webkit-text-stroke-width:0.15px;">/ Jeo Adam</span>
<span class="t" style="left:1466.33px;top:126.65px;font-size:14.24px;line-height:17px;color:#1f2a44;letter-spacing:0.3px;-webkit-text-stroke-width:0.15px;text-decoration:underline;text-decoration-thickness:1px;text-underline-offset:1.6px;">Save</span>
<span class="t" style="left:1514.43px;top:126.65px;font-size:14.24px;line-height:17px;color:#1f2a44;letter-spacing:0.12px;-webkit-text-stroke-width:0.15px;text-decoration:underline;text-decoration-thickness:1px;text-underline-offset:1.6px;">Save and Close</span>
<span class="t" style="left:1631.23px;top:126.65px;font-size:14.24px;line-height:17px;color:#1f2a44;letter-spacing:0.16px;-webkit-text-stroke-width:0.15px;text-decoration:underline;text-decoration-thickness:1px;text-underline-offset:1.6px;">Save and New</span>
<span class="t" style="left:1741.59px;top:126.65px;font-size:14.24px;line-height:17px;color:#1f2a44;letter-spacing:0.5px;-webkit-text-stroke-width:0.15px;text-decoration:underline;text-decoration-thickness:1px;text-underline-offset:1.6px;">Cancel</span>
<span class="t" style="left:319.5px;top:178.9px;font-size:15.5px;line-height:19px;color:#1f2a44;letter-spacing:0.58px;font-weight:700;">Details</span>
<span class="t" style="left:451.6px;top:178.9px;font-size:15.5px;line-height:19px;color:#555;letter-spacing:0.4px;-webkit-text-stroke-width:0.15px;">Address</span>
<span class="t" style="left:588.64px;top:178.9px;font-size:15.5px;line-height:19px;color:#555;letter-spacing:0.8px;-webkit-text-stroke-width:0.15px;">Communication</span>
<span class="t" style="left:782.94px;top:178.9px;font-size:15.5px;line-height:19px;color:#555;letter-spacing:0.4px;-webkit-text-stroke-width:0.15px;">Coverage</span>
<span class="t" style="left:930.07px;top:178.9px;font-size:15.5px;line-height:19px;color:#555;letter-spacing:0.88px;-webkit-text-stroke-width:0.15px;">Follow-up</span>
<span class="t" style="left:1081.47px;top:178.9px;font-size:15.5px;line-height:19px;color:#555;letter-spacing:0.57px;-webkit-text-stroke-width:0.15px;">Relationship</span>
<span class="t" style="left:294.4px;top:228px;font-size:14.24px;line-height:17px;color:#0c0c0c;letter-spacing:0.44px;-webkit-text-stroke:0.25px #0c0c0c;">Title:</span>
<span class="t" style="left:293.5px;top:262.8px;font-size:14.24px;line-height:17px;color:#0c0c0c;letter-spacing:0.29px;-webkit-text-stroke:0.25px #0c0c0c;">First Name:*</span>
<span class="t" style="left:293.5px;top:298.3px;font-size:14.24px;line-height:17px;color:#0c0c0c;letter-spacing:0.23px;-webkit-text-stroke:0.25px #0c0c0c;">Last Name:*</span>
<span class="t" style="left:293.5px;top:333.8px;font-size:14.24px;line-height:17px;color:#0c0c0c;letter-spacing:0.31px;-webkit-text-stroke:0.25px #0c0c0c;">Mobile Number:</span>
<span class="t" style="left:293.5px;top:369px;font-size:14.24px;line-height:17px;color:#0c0c0c;letter-spacing:0.32px;-webkit-text-stroke:0.25px #0c0c0c;">Email:</span>
<span class="t" style="left:293.98px;top:404px;font-size:14.24px;line-height:17px;color:#0c0c0c;letter-spacing:0.22px;-webkit-text-stroke:0.25px #0c0c0c;">Gender:</span>
<span class="t" style="left:293.5px;top:439px;font-size:14.24px;line-height:17px;color:#0c0c0c;letter-spacing:0.38px;-webkit-text-stroke:0.25px #0c0c0c;">Date Of Birth:</span>
<span class="t" style="left:1078.2px;top:228px;font-size:14.24px;line-height:17px;color:#0c0c0c;letter-spacing:0.39px;-webkit-text-stroke:0.25px #0c0c0c;">Patient ID:</span>
<span class="t" style="left:1078.2px;top:263px;font-size:14.24px;line-height:17px;color:#0c0c0c;letter-spacing:0.49px;-webkit-text-stroke:0.25px #0c0c0c;">Diabetic:</span>
<span class="t" style="left:1078.67px;top:298.5px;font-size:14.24px;line-height:17px;color:#0c0c0c;letter-spacing:0.41px;-webkit-text-stroke:0.25px #0c0c0c;">Contact Lens:</span>
<span class="t" style="left:1078.71px;top:333.5px;font-size:14.24px;line-height:17px;color:#0c0c0c;letter-spacing:0.46px;-webkit-text-stroke:0.25px #0c0c0c;">Occupation:</span>
<span class="t" style="left:1078.2px;top:368.9px;font-size:14.24px;line-height:17px;color:#0c0c0c;letter-spacing:0.32px;-webkit-text-stroke:0.25px #0c0c0c;">Health Card Number:</span>
<span class="t" style="left:1078.2px;top:404px;font-size:14.24px;line-height:17px;color:#0c0c0c;letter-spacing:0.26px;-webkit-text-stroke:0.25px #0c0c0c;">Health Card Expiry Date:</span>
<span class="t" style="left:1079.12px;top:439.6px;font-size:14.24px;line-height:17px;color:#0c0c0c;letter-spacing:0.29px;-webkit-text-stroke:0.25px #0c0c0c;">Age:</span>
<span class="t" style="left:482.48px;top:263px;font-size:14.24px;line-height:17px;color:#f8fb3c;letter-spacing:1.15px;-webkit-text-stroke-width:0.15px;">Jeo</span>
<span class="t" style="left:478.31px;top:297.9px;font-size:14.24px;line-height:17px;color:#2c2c00;letter-spacing:0.52px;-webkit-text-stroke-width:0.15px;">Adam</span>
<span class="t" style="left:1262.5px;top:228px;font-size:14.24px;line-height:17px;color:#111;letter-spacing:1.75px;font-weight:700;">P-000265</span>
<span class="t" style="left:1262.56px;top:262.8px;font-size:14.24px;line-height:17px;color:#333;letter-spacing:0.79px;-webkit-text-stroke-width:0.15px;">No</span>
<span class="t" style="left:1262.56px;top:298px;font-size:14.24px;line-height:17px;color:#333;letter-spacing:0.79px;-webkit-text-stroke-width:0.15px;">No</span>
<span class="t" style="left:1262.56px;top:332.9px;font-size:14.24px;line-height:17px;color:#333;letter-spacing:0.98px;-webkit-text-stroke-width:0.15px;">N/A</span>
<span class="t" style="left:1263.33px;top:439px;font-size:14.24px;line-height:17px;color:#333;letter-spacing:0px;-webkit-text-stroke-width:0.15px;">-</span>
<span class="t" style="left:339.58px;top:493.6px;font-size:15.5px;line-height:19px;color:#555;letter-spacing:0.28px;-webkit-text-stroke-width:0.15px;">Sales Invoices</span>
<span class="t" style="left:541.27px;top:493.6px;font-size:15.5px;line-height:19px;color:#555;letter-spacing:0.56px;-webkit-text-stroke-width:0.15px;">Examinations</span>
<span class="t" style="left:739.47px;top:493.6px;font-size:15.5px;line-height:19px;color:#0c0c00;letter-spacing:0.55px;font-weight:700;">Appointments</span>
<span class="t" style="left:948.0px;top:493.6px;font-size:15.5px;line-height:19px;color:#555;letter-spacing:0.92px;-webkit-text-stroke-width:0.15px;">Attachments</span>
<span class="t" style="left:1140.71px;top:493.6px;font-size:15.5px;line-height:19px;color:#555;letter-spacing:0.79px;-webkit-text-stroke-width:0.15px;">Insurance</span>
<span class="t" style="left:1312.94px;top:493.6px;font-size:15.5px;line-height:19px;color:#555;letter-spacing:0.67px;-webkit-text-stroke-width:0.15px;">Credits</span>
<span class="t" style="left:1463.47px;top:493.6px;font-size:15.5px;line-height:19px;color:#555;letter-spacing:0.47px;-webkit-text-stroke-width:0.15px;">Relatives</span>
<span class="t" style="left:1629.34px;top:493.6px;font-size:15.5px;line-height:19px;color:#555;letter-spacing:0.74px;-webkit-text-stroke-width:0.15px;">Communication</span>
<span class="t" style="left:319.26px;top:535.8px;font-size:14.24px;line-height:17px;color:#b9b9bb;letter-spacing:0.42px;-webkit-text-stroke-width:0.15px;">Delete</span>
<span class="t" style="left:407.16px;top:535.8px;font-size:14.24px;line-height:17px;color:#b9b9bb;letter-spacing:0.62px;-webkit-text-stroke-width:0.15px;">Edit</span>
<span class="t" style="left:518.38px;top:535.8px;font-size:14.24px;line-height:17px;color:#15152a;letter-spacing:0.26px;-webkit-text-stroke:0.25px #15152a;">Manage Slots</span>
<span class="t" style="left:653.06px;top:535.8px;font-size:14.24px;line-height:17px;color:#b9b9bb;letter-spacing:0.82px;-webkit-text-stroke-width:0.15px;">Print</span>
<span class="t" style="left:731.36px;top:535.8px;font-size:14.24px;line-height:17px;color:#b9b9bb;letter-spacing:0.22px;-webkit-text-stroke-width:0.15px;">New Exam</span>
<span class="t" style="left:841.94px;top:535.8px;font-size:14.24px;line-height:17px;color:#b9b9bb;letter-spacing:0.31px;-webkit-text-stroke-width:0.15px;">Open Patient</span>
<span class="t" style="left:973.53px;top:535.8px;font-size:14.24px;line-height:17px;color:#b9b9bb;letter-spacing:0.3px;-webkit-text-stroke-width:0.15px;">Send Update Link</span>
<span class="t" style="left:1136.36px;top:535.8px;font-size:14.24px;line-height:17px;color:#b9b9bb;letter-spacing:-0.62px;-webkit-text-stroke-width:0.15px;">HCV</span>
<span class="t" style="left:373.7px;top:573px;font-size:14.24px;line-height:17px;color:#1f2a44;letter-spacing:0.56px;font-weight:700;">Start On</span>
<span class="t" style="left:601.4px;top:573px;font-size:14.24px;line-height:17px;color:#1f2a44;letter-spacing:0.87px;font-weight:700;">Patient</span>
<span class="t" style="left:721.7px;top:573px;font-size:14.24px;line-height:17px;color:#1f2a44;letter-spacing:0.18px;font-weight:700;">End On</span>
<span class="t" style="left:949.2px;top:573px;font-size:14.24px;line-height:17px;color:#1f2a44;letter-spacing:0.71px;font-weight:700;">Store</span>
<span class="t" style="left:1050.3px;top:573px;font-size:14.24px;line-height:17px;color:#1f2a44;letter-spacing:0.61px;font-weight:700;">Doctor</span>
<span class="t" style="left:1165.2px;top:573px;font-size:14.24px;line-height:17px;color:#1f2a44;letter-spacing:0.49px;font-weight:700;">Description</span>
<span class="t" style="left:1328.72px;top:573px;font-size:14.24px;line-height:17px;color:#1f2a44;letter-spacing:0.51px;font-weight:700;">Appointment Status</span>
<span class="t" style="left:1578.92px;top:573px;font-size:14.24px;line-height:17px;color:#1f2a44;letter-spacing:0.45px;font-weight:700;">Appointment Type</span>
<span class="t" style="left:1810.46px;top:573px;font-size:14.24px;line-height:17px;color:#1f2a44;letter-spacing:0.35px;font-weight:700;">User</span>
<span class="t" style="left:374.05px;top:603px;font-size:14.24px;line-height:17px;color:#262600;letter-spacing:0.57px;-webkit-text-stroke-width:0.15px;">25-09-2025 10:00 AM</span>
<span class="t" style="left:602.08px;top:603px;font-size:14.24px;line-height:17px;color:#262600;letter-spacing:0.65px;-webkit-text-stroke-width:0.15px;">Jeo Adam</span>
<span class="t" style="left:722.15px;top:603px;font-size:14.24px;line-height:17px;color:#262600;letter-spacing:0.55px;-webkit-text-stroke-width:0.15px;">25-09-2025 10:20 AM</span>
<span class="t" style="left:948.76px;top:603px;font-size:14.24px;line-height:17px;color:#262600;letter-spacing:0.61px;-webkit-text-stroke-width:0.15px;">Demo</span>
<span class="t" style="left:1050.26px;top:603px;font-size:14.24px;line-height:17px;color:#262600;letter-spacing:-0.04px;-webkit-text-stroke-width:0.15px;">Loe Ray</span>
<span class="t" style="left:1515.16px;top:603px;font-size:14.24px;line-height:17px;color:#262600;letter-spacing:0.43px;-webkit-text-stroke-width:0.15px;">Booked</span>
<span class="t" style="left:1811.21px;top:603px;font-size:14.24px;line-height:17px;color:#333;letter-spacing:0.49px;-webkit-text-stroke-width:0.15px;">Admin</span>
<span class="t" style="left:300.76px;top:641px;font-size:14.24px;line-height:17px;color:#333;letter-spacing:-0.13px;-webkit-text-stroke-width:0.15px;">Page 1 of 1 (1 items)</span>
<span class="t" style="left:501.63px;top:641px;font-size:14.24px;line-height:17px;color:#fff;letter-spacing:0px;font-weight:700;">1</span>
<span class="t" style="left:1760.26px;top:640.2px;font-size:14.24px;line-height:17px;color:#333;letter-spacing:0.12px;-webkit-text-stroke-width:0.15px;">Page size:</span>
<span class="t" style="left:1835.49px;top:641px;font-size:15px;line-height:18px;color:#000;letter-spacing:1.11px;-webkit-text-stroke-width:0;">20</span>
<svg class="b" style="left:0;top:0;will-change:transform" width="254" height="677" viewBox="0 0 254 677"><path fill-rule="evenodd" fill="#fff" d="M62.3 7.6 H64.5 Q75 7.6 75 18.1 V23.1 Q75 33.6 64.5 33.6 H62.3 Q51.8 33.6 51.8 23.1 V18.1 Q51.8 7.6 62.3 7.6 Z M63.099999999999994 12.9 H63.5 Q67.3 12.9 67.3 16.7 V23.9 Q67.3 27.7 63.5 27.7 H63.099999999999994 Q59.3 27.7 59.3 23.9 V16.7 Q59.3 12.9 63.099999999999994 12.9 Z"/>
<line x1="49.5" y1="27.4" x2="72.6" y2="7.1" stroke="#1f2a44" stroke-width="3.4"/>
<path fill-rule="evenodd" fill="#fff" d="M188.0 7.6 H190.0 Q200.5 7.6 200.5 18.1 V23.1 Q200.5 33.6 190.0 33.6 H188.0 Q177.5 33.6 177.5 23.1 V18.1 Q177.5 7.6 188.0 7.6 Z M188.70000000000002 12.9 H189.1 Q192.9 12.9 192.9 16.7 V23.9 Q192.9 27.7 189.1 27.7 H188.70000000000002 Q184.9 27.7 184.9 23.9 V16.7 Q184.9 12.9 188.70000000000002 12.9 Z"/>
<line x1="178.6" y1="6.9" x2="202.4" y2="27.8" stroke="#1f2a44" stroke-width="3.4"/>
<text x="76.2" y="32.7" font-family="Liberation Sans, sans-serif" font-weight="700" font-size="36" fill="#fff" stroke="#fff" stroke-width="0.9" textLength="99" lengthAdjust="spacingAndGlyphs">ptopr</text>
<rect x="70" y="40.3" width="110" height="4" fill="#1f2a44"/>
<path d="M19.4 61.8 L29.2 73.8 L24.8 73.8 L24.8 88.2 L14.6 88.2 L14.6 73.8 L10 73.8 Z" fill="#fff"/>
<circle cx="11.7" cy="80.4" r="8.6" fill="#1f2a44"/>
<circle cx="11.7" cy="80.4" r="6.8" fill="#1f2a44" stroke="#fff" stroke-width="1.9"/>
<text x="11.7" y="84.4" text-anchor="middle" font-family="Liberation Sans, sans-serif" font-weight="700" font-size="11" fill="#fff">$</text>
<path d="M24.6 165.5 H32 L36.3 169.8 V181.20000000000002 Q36.3 182.10000000000002 35.4 182.10000000000002 H24.6 Q23.7 182.10000000000002 23.7 181.20000000000002 V166.4 Q23.7 165.5 24.6 165.5 Z" fill="none" stroke="#6d7590" stroke-width="1.3" stroke-linejoin="round"/>
<path d="M32 165.5 V169.8 H36.3" fill="none" stroke="#6d7590" stroke-width="1.04"/>
<path d="M27 174.5 H33 M27 176.5 H33 M27 178.5 H30.6" stroke="#9299ad" stroke-width="1.3"/>
<path d="M24.6 199.75 H32 L36.3 204.05 V215.45000000000002 Q36.3 216.35000000000002 35.4 216.35000000000002 H24.6 Q23.7 216.35000000000002 23.7 215.45000000000002 V200.65 Q23.7 199.75 24.6 199.75 Z" fill="none" stroke="#6d7590" stroke-width="1.3" stroke-linejoin="round"/>
<path d="M32 199.75 V204.05 H36.3" fill="none" stroke="#6d7590" stroke-width="1.04"/>
<path d="M27 208.75 H33 M27 210.75 H33 M27 212.75 H30.6" stroke="#9299ad" stroke-width="1.3"/>
<path d="M24.6 234.0 H32 L36.3 238.3 V249.70000000000002 Q36.3 250.60000000000002 35.4 250.60000000000002 H24.6 Q23.7 250.60000000000002 23.7 249.70000000000002 V234.9 Q23.7 234.0 24.6 234.0 Z" fill="none" stroke="#6d7590" stroke-width="1.3" stroke-linejoin="round"/>
<path d="M32 234.0 V238.3 H36.3" fill="none" stroke="#6d7590" stroke-width="1.04"/>
<path d="M27 243.0 H33 M27 245.0 H33 M27 247.0 H30.6" stroke="#9299ad" stroke-width="1.3"/>
<path d="M24.6 268.25 H32 L36.3 272.55 V283.95 Q36.3 284.85 35.4 284.85 H24.6 Q23.7 284.85 23.7 283.95 V269.15000000000003 Q23.7 268.25 24.6 268.25 Z" fill="none" stroke="#6d7590" stroke-width="1.3" stroke-linejoin="round"/>
<path d="M32 268.25 V272.55 H36.3" fill="none" stroke="#6d7590" stroke-width="1.04"/>
<path d="M27 277.25 H33 M27 279.25 H33 M27 281.25 H30.6" stroke="#9299ad" stroke-width="1.3"/>
<path d="M24.6 302.5 H32 L36.3 306.8 V318.2 Q36.3 319.1 35.4 319.1 H24.6 Q23.7 319.1 23.7 318.2 V303.40000000000003 Q23.7 302.5 24.6 302.5 Z" fill="none" stroke="#6d7590" stroke-width="1.3" stroke-linejoin="round"/>
<path d="M32 302.5 V306.8 H36.3" fill="none" stroke="#6d7590" stroke-width="1.04"/>
<path d="M27 311.5 H33 M27 313.5 H33 M27 315.5 H30.6" stroke="#9299ad" stroke-width="1.3"/>
<path d="M24.6 336.75 H32 L36.3 341.05 V352.45 Q36.3 353.35 35.4 353.35 H24.6 Q23.7 353.35 23.7 352.45 V337.65000000000003 Q23.7 336.75 24.6 336.75 Z" fill="none" stroke="#6d7590" stroke-width="1.3" stroke-linejoin="round"/>
<path d="M32 336.75 V341.05 H36.3" fill="none" stroke="#6d7590" stroke-width="1.04"/>
<path d="M27 345.75 H33 M27 347.75 H33 M27 349.75 H30.6" stroke="#9299ad" stroke-width="1.3"/>
<path d="M24.6 371.0 H32 L36.3 375.3 V386.7 Q36.3 387.6 35.4 387.6 H24.6 Q23.7 387.6 23.7 386.7 V371.90000000000003 Q23.7 371.0 24.6 371.0 Z" fill="none" stroke="#6d7590" stroke-width="1.3" stroke-linejoin="round"/>
<path d="M32 371.0 V375.3 H36.3" fill="none" stroke="#6d7590" stroke-width="1.04"/>
<path d="M27 380.0 H33 M27 382.0 H33 M27 384.0 H30.6" stroke="#9299ad" stroke-width="1.3"/>
<path d="M24.6 405.25 H32 L36.3 409.55 V420.95 Q36.3 421.85 35.4 421.85 H24.6 Q23.7 421.85 23.7 420.95 V406.15000000000003 Q23.7 405.25 24.6 405.25 Z" fill="none" stroke="#6d7590" stroke-width="1.3" stroke-linejoin="round"/>
<path d="M32 405.25 V409.55 H36.3" fill="none" stroke="#6d7590" stroke-width="1.04"/>
<path d="M27 414.25 H33 M27 416.25 H33 M27 418.25 H30.6" stroke="#9299ad" stroke-width="1.3"/>
<path d="M43.800000000000004 120.7 H51.2 L55.5 125 V136.4 Q55.5 137.3 54.6 137.3 H43.800000000000004 Q42.900000000000006 137.3 42.900000000000006 136.4 V121.6 Q42.900000000000006 120.7 43.800000000000004 120.7 Z" fill="none" stroke="#e4e4e4" stroke-width="1.2" stroke-linejoin="round"/>
<path d="M51.2 120.7 V125 H55.5" fill="none" stroke="#e4e4e4" stroke-width="0.96"/>
<path d="M46.2 129.7 H52.2 M46.2 131.7 H52.2 M46.2 133.7 H49.800000000000004" stroke="#e8e8e8" stroke-width="1.3"/>
<ellipse cx="16.1" cy="456.9" rx="6.2" ry="7" fill="#fff"/>
<path d="M5.1 473.7 V469.4 Q5.1 465.4 9 464.4 L12.4 463.2 L16.1 467.6 L19.8 463.2 L23.2 464.4 Q26.9 465.4 26.9 469.4 V473.7 Z" fill="#fff"/>
<path d="M11.6 463.6 L16.1 468.8 L20.6 463.6" fill="none" stroke="#1f2a44" stroke-width="0.8"/>
<path d="M7.5 471.6 V469.4 Q7.5 468 8.9 468 Q10.3 468 10.3 469.4 V471.6" fill="none" stroke="#1f2a44" stroke-width="0.9"/>
<circle cx="22.6" cy="467.6" r="1.1" fill="#1f2a44" opacity="0.75"/>
<path d="M12.2 498.6 H10.4 Q8.5 498.6 8 500.6 L5.7 509.4" fill="none" stroke="#fff" stroke-width="1.9" stroke-linecap="round"/>
<path d="M19.9 498.6 H21.7 Q23.6 498.6 24.1 500.6 L26.4 509.4" fill="none" stroke="#fff" stroke-width="1.9" stroke-linecap="round"/>
<path d="M4.2 510.4 Q4.2 508.4 6.2 508.4 H13.2 Q15.2 508.4 15.2 510.4 V512.4 Q15.2 517.4 9.7 517.4 Q4.2 517.4 4.2 512.4 Z" fill="#fff"/>
<path d="M16.9 510.4 Q16.9 508.4 18.9 508.4 H25.9 Q27.9 508.4 27.9 510.4 V512.4 Q27.9 517.4 22.4 517.4 Q16.9 517.4 16.9 512.4 Z" fill="#fff"/>
<rect x="14.6" y="510.4" width="3" height="2.2" fill="#fff"/>
<path d="M2.9 547.3 L7.7 546 V560.5 H6.4 Z" fill="#fff"/>
<path d="M29.4 547.3 L24.7 546 V560.5 H26 Z" fill="#fff"/>
<rect x="9" y="542.9" width="14.4" height="26" rx="0.6" fill="#fff"/>
<rect x="13.1" y="548.4" width="6.1" height="4.6" rx="0.8" fill="none" stroke="#1f2a44" stroke-width="1.6"/>
<path d="M13.8 557.4 H19.7 M12.5 560.6 H19.7 M12.5 563.9 H18" stroke="#1f2a44" stroke-width="1.4"/>
<circle cx="15.8" cy="602.9" r="13.1" fill="#fff"/>
<text x="15.8" y="610.6" text-anchor="middle" font-family="Liberation Sans, sans-serif" font-weight="700" font-size="21" fill="#1f2a44">$</text>
<path d="M3 658.8 V654.2 A13.05 13.05 0 0 1 29.1 654.2 V658.8 Z" fill="#fff"/>
<path d="M6.2 655.4 V654.2 A9.85 9.85 0 0 1 25.9 654.2 V655.4 Z" fill="#1f2a44"/>
<path d="M16.05 645 V647.4 M9.4 647.8 L10.9 649.5 M22.7 647.8 L21.2 649.5 M7 653.2 H9 M25.1 653.2 H23.1" stroke="#fff" stroke-width="1.1"/>
<path d="M14.4 655.2 L19.8 648.2 L17.4 655.4 Z" fill="#fff"/></svg>
<span class="t" style="left:39.58px;top:66.8px;font-size:15.26px;line-height:18px;color:#fff;letter-spacing:0.45px;-webkit-text-stroke-width:0.15px;will-change:transform;">Business Desk</span>
<span class="t" style="left:53.0px;top:164.8px;font-size:14.96px;line-height:18px;color:#b9bfcd;letter-spacing:0.52px;-webkit-text-stroke-width:0.15px;will-change:transform;">Registrations</span>
<span class="t" style="left:54.0px;top:199.05px;font-size:14.96px;line-height:18px;color:#b9bfcd;letter-spacing:0.7px;-webkit-text-stroke-width:0.15px;will-change:transform;">Appointments</span>
<span class="t" style="left:53.0px;top:233.3px;font-size:14.96px;line-height:18px;color:#b9bfcd;letter-spacing:0.49px;-webkit-text-stroke-width:0.15px;will-change:transform;">Examinations</span>
<span class="t" style="left:53.3px;top:267.55px;font-size:14.96px;line-height:18px;color:#b9bfcd;letter-spacing:0.21px;-webkit-text-stroke-width:0.15px;will-change:transform;">Sales Invoices</span>
<span class="t" style="left:54.03px;top:301.8px;font-size:14.96px;line-height:18px;color:#b9bfcd;letter-spacing:-0.08px;-webkit-text-stroke-width:0.15px;will-change:transform;">Work Orders</span>
<span class="t" style="left:53.52px;top:336.05px;font-size:14.96px;line-height:18px;color:#b9bfcd;letter-spacing:0.52px;-webkit-text-stroke-width:0.15px;will-change:transform;">Quotations</span>
<span class="t" style="left:53.0px;top:370.3px;font-size:14.96px;line-height:18px;color:#b9bfcd;letter-spacing:0.27px;-webkit-text-stroke-width:0.15px;will-change:transform;">Follow Up</span>
<span class="t" style="left:53.52px;top:404.55px;font-size:14.96px;line-height:18px;color:#b9bfcd;letter-spacing:-0.48px;-webkit-text-stroke-width:0.15px;will-change:transform;">OHIP HCVs</span>
<span class="t" style="left:39.59px;top:452.8px;font-size:15.26px;line-height:18px;color:#fff;letter-spacing:0.49px;-webkit-text-stroke-width:0.15px;will-change:transform;">Doctor&#x27;s Desk</span>
<span class="t" style="left:39.58px;top:500px;font-size:15.26px;line-height:18px;color:#fff;letter-spacing:0.44px;-webkit-text-stroke-width:0.15px;will-change:transform;">Back Office</span>
<span class="t" style="left:40.05px;top:547.5px;font-size:15.26px;line-height:18px;color:#fff;letter-spacing:0.61px;-webkit-text-stroke-width:0.15px;will-change:transform;">Catalogs</span>
<span class="t" style="left:40.61px;top:594.7px;font-size:15.26px;line-height:18px;color:#fff;letter-spacing:0.97px;-webkit-text-stroke-width:0.15px;will-change:transform;">Accounts</span>
<span class="t" style="left:39.59px;top:641.9px;font-size:15.26px;line-height:18px;color:#fff;letter-spacing:0.64px;-webkit-text-stroke-width:0.15px;will-change:transform;">Dashboards</span>
</body></html>
